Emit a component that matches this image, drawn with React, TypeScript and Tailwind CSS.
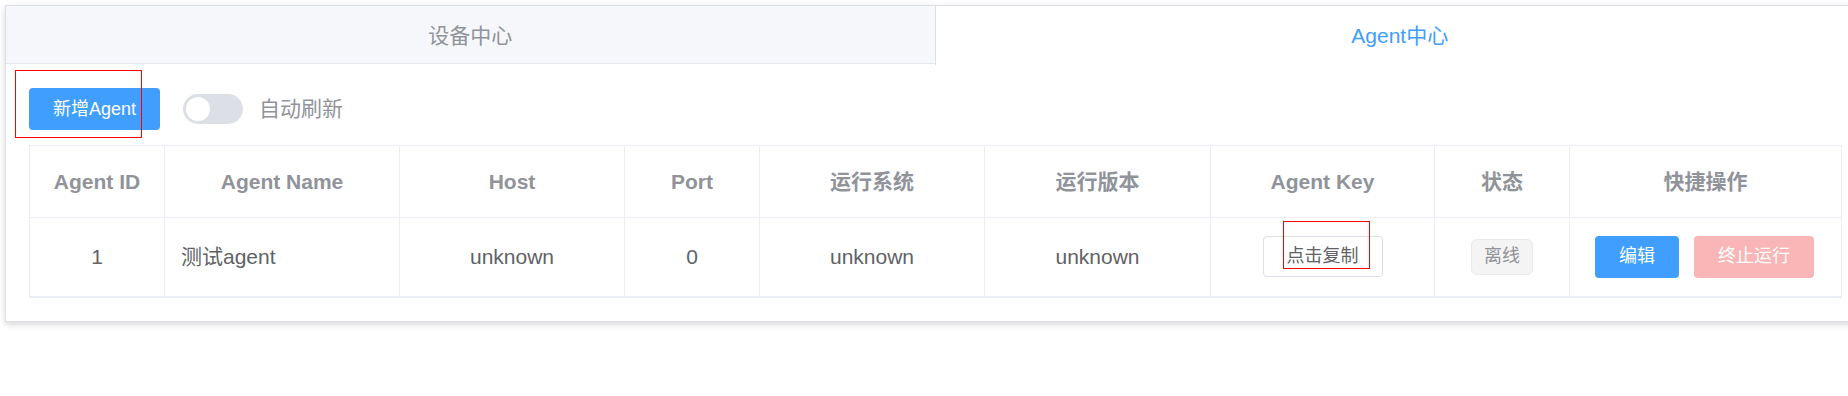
import { useState } from "react";

const FONT = "font-['Liberation_Sans','Noto_Sans_CJK_SC',sans-serif]";

const COLUMNS = [
  { label: "Agent ID", width: "w-[135px]" },
  { label: "Agent Name", width: "w-[235px]" },
  { label: "Host", width: "w-[225px]" },
  { label: "Port", width: "w-[135px]" },
  { label: "运行系统", width: "w-[225px]" },
  { label: "运行版本", width: "w-[226px]" },
  { label: "Agent Key", width: "w-[224px]" },
  { label: "状态", width: "w-[135px]" },
  { label: "快捷操作", width: "w-[272px]" },
];

const AGENTS = [{ id: 1, name: "测试agent", host: "unknown", port: 0, os: "unknown", version: "unknown" }];

export default function App() {
  const [activeTab, setActiveTab] = useState("agent");
  const [autoRefresh, setAutoRefresh] = useState(false);

  return (
    <div className={`relative h-[396px] w-[1848px] overflow-hidden bg-white ${FONT}`}>
      <div className="ml-[5px] mt-[5px] w-[1860px] border border-[#dcdfe6] bg-white shadow-[0_3px_6px_0_rgba(0,0,0,0.12),0_0_9px_0_rgba(0,0,0,0.04)]">
        <div className="flex h-[58px] border-b border-[#e4e7ed] bg-[#f5f7fa]">
          <button
            type="button"
            onClick={() => setActiveTab("device")}
            className={`flex h-[59px] flex-1 items-center justify-center border-r border-[#dcdfe6] text-[21px] ${
              activeTab === "device" ? "bg-white text-[#409eff]" : "text-[#909399]"
            }`}
          >
            设备中心
          </button>
          <button
            type="button"
            onClick={() => setActiveTab("agent")}
            className={`flex h-[59px] flex-1 items-center justify-center text-[21px] ${
              activeTab === "agent" ? "bg-white text-[#409eff]" : "text-[#909399]"
            }`}
          >
            Agent中心
          </button>
        </div>

        <div className="px-[23px] pb-[23px] pt-[24px]">
          <div className="flex items-center">
            <button
              type="button"
              className="h-[42px] w-[131px] rounded-[4px] bg-[#409eff] text-[18px] text-white"
            >
              新增Agent
            </button>
            <button
              type="button"
              aria-label="自动刷新"
              onClick={() => setAutoRefresh((on) => !on)}
              className={`ml-[23px] flex h-[30px] w-[60px] items-center rounded-full px-[3px] ${
                autoRefresh ? "justify-end bg-[#409eff]" : "bg-[#dcdfe6]"
              }`}
            >
              <span className="h-[24px] w-[24px] rounded-full bg-white" />
            </button>
            <span className="ml-[16px] text-[21px] text-[#909399]">自动刷新</span>
          </div>

          <table className="mt-[15px] w-[1812px] table-fixed border-collapse border border-b-2 border-[#ebeef5]">
            <thead>
              <tr>
                {COLUMNS.map((col) => (
                  <th
                    key={col.label}
                    className={`${col.width} h-[72px] border border-[#ebeef5] text-center text-[21px] font-bold text-[#909399]`}
                  >
                    {col.label}
                  </th>
                ))}
              </tr>
            </thead>
            <tbody>
              {AGENTS.map((agent) => (
                <tr key={agent.id} className="text-[21px] text-[#606266]">
                  <td className="h-[79px] border border-[#ebeef5] text-center">{agent.id}</td>
                  <td className="border border-[#ebeef5] pl-[16px]">{agent.name}</td>
                  <td className="border border-[#ebeef5] text-center">{agent.host}</td>
                  <td className="border border-[#ebeef5] text-center">{agent.port}</td>
                  <td className="border border-[#ebeef5] text-center">{agent.os}</td>
                  <td className="border border-[#ebeef5] text-center">{agent.version}</td>
                  <td className="border border-[#ebeef5] text-center">
                    <button
                      type="button"
                      className="h-[41px] w-[120px] rounded-[4px] border border-[#dcdfe6] bg-white text-[18px] text-[#606266]"
                    >
                      点击复制
                    </button>
                  </td>
                  <td className="border border-[#ebeef5] text-center">
                    <span className="inline-flex h-[36px] items-center rounded-[6px] border border-[#e9e9eb] bg-[#f4f4f5] px-[12px] text-[18px] text-[#909399]">
                      离线
                    </span>
                  </td>
                  <td className="border border-[#ebeef5]">
                    <div className="flex items-center justify-center gap-[15px] pr-[2px]">
                      <button
                        type="button"
                        className="h-[42px] w-[84px] rounded-[4px] bg-[#409eff] text-[18px] text-white"
                      >
                        编辑
                      </button>
                      <button
                        type="button"
                        disabled
                        className="h-[42px] w-[120px] cursor-not-allowed rounded-[4px] bg-[#fab6b6] text-[18px] text-white"
                      >
                        终止运行
                      </button>
                    </div>
                  </td>
                </tr>
              ))}
            </tbody>
          </table>
        </div>
      </div>

      {/* annotation boxes over the screenshot */}
      <div className="pointer-events-none absolute left-[15px] top-[70px] h-[68px] w-[127px] border border-[#ff0000]" />
      <div className="pointer-events-none absolute left-[1283px] top-[221px] h-[48px] w-[87px] border border-[#ff0000]" />
    </div>
  );
}
